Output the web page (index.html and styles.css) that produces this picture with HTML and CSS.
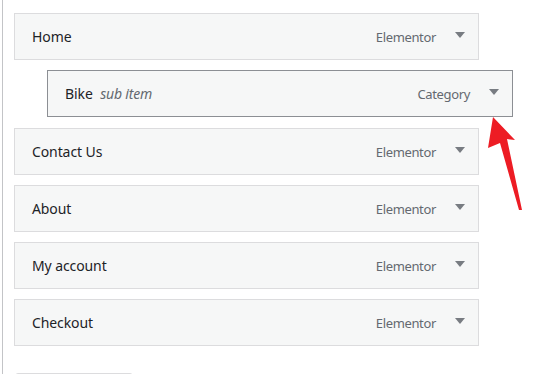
FILE: index.html
```html
<!DOCTYPE html>
<html>
<head>
<meta charset="utf-8">
<link rel="stylesheet" href="styles.css">
</head>
<body>
<div class="page">
  <ul class="menu">
    <li class="item"><span class="title">Home</span><span class="controls"><span class="type">Elementor</span><span class="caret"></span></span></li>
    <li class="item sub"><span class="title">Bike <em class="note">sub item</em></span><span class="controls"><span class="type">Category</span><span class="caret"></span></span></li>
    <li class="item"><span class="title">Contact Us</span><span class="controls"><span class="type">Elementor</span><span class="caret"></span></span></li>
    <li class="item"><span class="title">About</span><span class="controls"><span class="type">Elementor</span><span class="caret"></span></span></li>
    <li class="item"><span class="title">My account</span><span class="controls"><span class="type">Elementor</span><span class="caret"></span></span></li>
    <li class="item"><span class="title">Checkout</span><span class="controls"><span class="type">Elementor</span><span class="caret"></span></span></li>
  </ul>
  <div class="button-row"><span class="btn"></span></div>
  <svg class="pointer" width="553" height="374" viewBox="0 0 553 374">
    <polygon points="493,117 515,140 507,139 522,210 519,210 500,143 488,148" fill="#ed1c24"/>
  </svg>
</div>
</body>
</html>
```
FILE: styles.css
```css
html, body {
  margin: 0;
  padding: 0;
  background: #fff;
}
body {
  font-family: "Noto Sans", "Open Sans", sans-serif;
  width: 553px;
  height: 374px;
  overflow: hidden;
}
.page {
  position: relative;
  margin-left: 2px;
  border-left: 1px solid #c3c4c7;
  height: 374px;
  padding: 13px 0 0 11px;
  box-sizing: border-box;
  overflow: hidden;
}
.menu {
  list-style: none;
  margin: 0;
  padding: 0;
}
.item {
  box-sizing: border-box;
  width: 465px;
  height: 47px;
  margin-bottom: 10px;
  background: #f6f7f7;
  border: 1px solid #dcdcde;
  display: flex;
  align-items: center;
  justify-content: space-between;
  padding: 0 13px 0 17px;
}
.item.sub {
  margin-left: 33px;
  width: 466px;
  border-color: #8c8f94;
  margin-bottom: 11px;
}
.title {
  font-size: 14px;
  color: #1d2327;
  font-weight: 400;
  line-height: 20px;
  letter-spacing: -0.1px;
}
.note {
  font-size: 14px;
  color: #646970;
  font-weight: 400;
  margin-left: 4px;
  letter-spacing: -0.2px;
}
.controls {
  display: flex;
  align-items: center;
  gap: 19px;
  margin-top: -2px;
}
.type {
  font-size: 13px;
  color: #646970;
  line-height: 20px;
  margin-top: 3px;
  letter-spacing: -0.35px;
}
.caret {
  width: 0;
  height: 0;
  border-left: 5px solid transparent;
  border-right: 5px solid transparent;
  border-top: 6px solid #787c82;
  margin-top: -2px;
}
.button-row {
  padding-top: 17px;
  padding-left: 1px;
}
.btn {
  display: block;
  width: 118px;
  height: 30px;
  box-sizing: border-box;
  border: 1px solid #dcdcde;
  border-radius: 3px;
  background: #f6f7f7;
}
.pointer {
  position: absolute;
  left: -3px;
  top: 0;
}
```
